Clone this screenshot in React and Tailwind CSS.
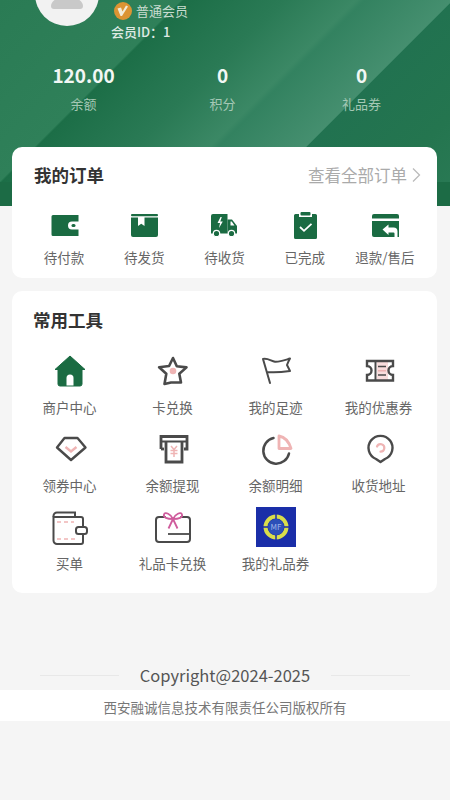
import React from 'react';

const GREEN = '#1a6b42';
const DARK = '#4a4a4a';
const PINK = '#efb4b4';

const orderItems = [
  {
    label: '待付款',
    icon: (
      <>
        <path d="M3.500 7.500A1.500 1.500 0 0 1 5 6h25.500v6.500H24a4 4 0 0 0 0 8h6.500V27H5a1.500 1.500 0 0 1-1.500-1.500z" fill={GREEN} />
        <rect x="23.500" y="15" width="4" height="3" rx="1.500" fill={GREEN} />
      </>
    ),
  },
  {
    label: '待发货',
    icon: (
      <>
        <rect x="3" y="5" width="27" height="2.200" rx="1" fill={GREEN} />
        <path d="M3 8.500h27V26a2 2 0 0 1-2 2H5a2 2 0 0 1-2-2z" fill={GREEN} />
        <path d="M10 8h6.500v9l-3.250-2.200L10 17z" fill="#fff" />
      </>
    ),
  },
  {
    label: '待收货',
    icon: (
      <>
        <path d="M3 7a2 2 0 0 1 2-2h14.500v19.500H3z" fill={GREEN} />
        <path d="M19.500 10.500h4.500l5 6.500v7.500h-9.500z" fill={GREEN} />
        <path d="M22.500 12.500h1.200l2.800 4h-4z" fill="#fff" />
        <circle cx="8.500" cy="24.500" r="3.200" fill={GREEN} stroke="#fff" strokeWidth="1.200" />
        <circle cx="23.500" cy="24.500" r="3.200" fill={GREEN} stroke="#fff" strokeWidth="1.200" />
        <path d="M12.500 8l-3 6h2.500l-1 5 3.800-6.500h-2.500l1.500-4.500z" fill="#fff" />
      </>
    ),
  },
  {
    label: '已完成',
    icon: (
      <>
        <path d="M5 6.500a1.500 1.500 0 0 1 1.500-1.500H10v3h13V5h3.500A1.500 1.500 0 0 1 28 6.500V28.500a1.500 1.500 0 0 1-1.500 1.500h-20A1.500 1.500 0 0 1 5 28.500z" fill={GREEN} />
        <rect x="11.500" y="3" width="10" height="3.500" rx="1" fill={GREEN} />
        <path d="M11 18l4 3.800 7.500-7" fill="none" stroke="#fff" strokeWidth="1.800" />
      </>
    ),
  },
  {
    label: '退款/售后',
    icon: (
      <>
        <path d="M3 7a2 2 0 0 1 2-2h23a2 2 0 0 1 2 2v2.500H3z" fill={GREEN} />
        <path d="M3 12h27v16H5a2 2 0 0 1-2-2z" fill={GREEN} />
        <path d="M13.500 20.500l6-5v3h5a4 4 0 0 1 4 4V28h-3v-3.500a1 1 0 0 0-1-1h-5v2.500z" fill="#fff" />
      </>
    ),
  },
];

const toolItems = [
  {
    label: '商户中心',
    icon: (
      <>
        <path d="M20 5L35 18.500h-3V33a2 2 0 0 1-2 2H10a2 2 0 0 1-2-2V18.500H5z" fill={GREEN} stroke={GREEN} strokeLinejoin="round" />
        <path d="M16.500 34.500V27a3.500 3.500 0 0 1 7 0v7.500z" fill="#fff" />
      </>
    ),
  },
  {
    label: '卡兑换',
    icon: (
      <>
        <path d="M20 7l3.800 8.200 9.700 1.200-7.200 6.400 1.700 8.700H18l-6.500 1.500 1.800-10.200-7.200-6.600 10-1.200z" fill="none" stroke={DARK} strokeWidth="2.600" strokeLinejoin="round" />
        <circle cx="20" cy="20" r="3.300" fill={PINK} />
      </>
    ),
  },
  {
    label: '我的足迹',
    icon: <path d="M14 32L7 8C12 7 15 10 19 10.700C24 11 29 9 34 7.500C32 11 31 14 31 14C32 16 33 18 34 20C27 21 20 22 11 21" fill="none" stroke={DARK} strokeWidth="2" strokeLinejoin="round" strokeLinecap="round" />,
  },
  {
    label: '我的优惠券',
    icon: (
      <>
        <rect x="18" y="11" width="11" height="18" fill={PINK} opacity="0.45" />
        <path d="M8 10h26v5a4.500 4.500 0 0 0 0 9v5.500H8V24a4.500 4.500 0 0 0 0-9z" fill="none" stroke={DARK} strokeWidth="2.400" />
        <path d="M16.500 10v19.500" stroke={DARK} strokeWidth="2" />
        <path d="M19 15.500h8M19 24h8" stroke={DARK} strokeWidth="1.600" />
        <path d="M19 19.750h8" stroke={PINK} strokeWidth="1.600" />
      </>
    ),
  },
  {
    label: '领券中心',
    icon: (
      <>
        <path d="M14.500 9h13l8 9.500L21 31 7 18.500z" fill="none" stroke={DARK} strokeWidth="2.400" strokeLinejoin="round" />
        <path d="M15.500 18l5.500 4.500 5.500-4.500" fill="none" stroke={PINK} strokeWidth="2.400" />
      </>
    ),
  },
  {
    label: '余额提现',
    icon: (
      <>
        <path d="M8 20V7.500h26V20h-3" fill="none" stroke={DARK} strokeWidth="2.800" />
        <path d="M8 20h3" stroke={DARK} strokeWidth="2.800" />
        <path d="M8 12.500h26" stroke={DARK} strokeWidth="2" />
        <path d="M13 13v20h16V13" fill="none" stroke={DARK} strokeWidth="2.800" />
        <path d="M18 17l3 3.500 3-3.500M17.500 21.500h7M17.500 24.500h7M21 20.500V28" fill="none" stroke={PINK} strokeWidth="1.500" />
      </>
    ),
  },
  {
    label: '余额明细',
    icon: (
      <>
        <path d="M17.500 9A13 13 0 1 0 33 24.500" fill="none" stroke={DARK} strokeWidth="2.500" strokeLinecap="round" />
        <path d="M23 7c5.500 1 10 6 12 12.500H23z" fill="none" stroke={PINK} strokeWidth="2.800" strokeLinejoin="round" />
      </>
    ),
  },
  {
    label: '收货地址',
    icon: (
      <>
        <path d="M21.500 33L17 30A12 12 0 1 1 26 30z" fill="none" stroke={DARK} strokeWidth="2.400" strokeLinejoin="round" />
        <path d="M18 17.500a3.800 3.800 0 1 1 3.500 5.200" fill="none" stroke={PINK} strokeWidth="2.200" strokeLinecap="round" />
      </>
    ),
  },
  {
    label: '买单',
    icon: (
      <>
        <path d="M25 9V5.500H7A3.500 3.500 0 0 0 3.500 9v24.500a3.500 3.500 0 0 0 3.500 3.500h24a2 2 0 0 0 2-2v-8" fill="none" stroke={DARK} strokeWidth="2" />
        <path d="M3.500 9a1 1 0 0 0 1 1H31a2 2 0 0 1 2 2v8" fill="none" stroke={DARK} strokeWidth="2" />
        <rect x="26" y="20" width="11" height="7" rx="2.500" fill="#fff" stroke={DARK} strokeWidth="2" />
        <path d="M7 15h17M7 32h20" stroke={PINK} strokeWidth="1.600" strokeDasharray="4 3" />
      </>
    ),
  },
  {
    label: '礼品卡兑换',
    icon: (
      <>
        <path d="M12 10H6a3 3 0 0 0-3 3v19a3 3 0 0 0 3 3h28a3 3 0 0 0 3-3V13a3 3 0 0 0-3-3h-6" fill="none" stroke={DARK} strokeWidth="2" strokeLinecap="round" />
        <path d="M15 27h22" stroke={DARK} strokeWidth="1.800" />
        <path d="M20 12c-2-5-8-7.500-9-4.500s3 4.500 9 4.500c6 0 10-1.500 9-4.500S22 7 20 12zM20 12l-4.500 9.500M20 12l4.500 9.500" fill="none" stroke="#cf5c9c" strokeWidth="1.800" />
      </>
    ),
  },
  {
    label: '我的礼品券',
    icon: (
      <>
        <rect width="40" height="40" fill="#1a2ea8" />
        <circle cx="20" cy="20" r="10.500" fill="none" stroke="#d9dd4a" strokeWidth="4" />
        <path d="M20 5v30M5 20h30" stroke="#1a2ea8" strokeWidth="1.500" />
        <circle cx="20" cy="20" r="8" fill="#2c4fb8" />
        <text x="20" y="23" textAnchor="middle" fontSize="8" fill="#9fb4e8">MF</text>
      </>
    ),
  },
];

const stats = [
  { value: '120.00', label: '余额' },
  { value: '0', label: '积分' },
  { value: '0', label: '礼品券' },
];

export default function App() {
  return (
    <div className="w-[450px] h-[800px] overflow-hidden bg-[#f5f5f5] font-['Noto_Sans_CJK_SC',sans-serif]">
      {/* green header with the diagonal light bands */}
      <div className="h-[206px] overflow-hidden bg-[linear-gradient(to_bottom,transparent_182px,#1c6b45_182px),linear-gradient(135deg,#2a7b54_0px,#2f8059_128px,#1c6e47_130px,#2a7a55_200px,#3b8865_252px,#338260_258px,#458f6f_320px,#217250_321px,#24754f_400px,#2a7a55_464px)]">
        <div className="flex">
          <div className="w-16 h-16 ml-[35px] -mt-[38px] rounded-full bg-[#f2f2f2] flex justify-center overflow-hidden shrink-0">
            <svg width="34" height="20" viewBox="0 0 34 20" className="mt-[27px]">
              <path d="M11 0h12v8c4 1 10 4 10 9a3 3 0 0 1-3 3H4a3 3 0 0 1-3-3c0-5 6-8 10-9z" fill="#c9c9c9" />
            </svg>
          </div>
          <div className="ml-3 text-[13px] leading-[21px] text-[#c9dcd1]">
            <div className="flex items-center ml-[3px]">
              <svg width="18" height="18" viewBox="0 0 18 18" className="mr-[4px]">
                <circle cx="9" cy="9" r="9" fill="#dc9433" />
                <path d="M3.500 6.500l3.500-1 1.500 4L12 3.500l2 1-6 9.500H6.500z" fill="#f3ecd9" />
              </svg>
              普通会员
            </div>
            <div className="font-medium text-[#dfeae4]">会员ID：1</div>
          </div>
        </div>
        <div className="grid grid-cols-3 mt-[20px] ml-[14px] w-[417px] text-center">
          {stats.map((s) => (
            <div key={s.label}>
              <div className="text-[19px] leading-[26px] font-bold text-[#f2f7f4]">{s.value}</div>
              <div className="text-[13px] leading-[18px] mt-[7px] text-[#a5c8b5]">{s.label}</div>
            </div>
          ))}
        </div>
      </div>

      {/* my orders */}
      <div className="-mt-[59px] mx-3 w-[425px] h-[131px] bg-white rounded-[10px]">
        <div className="flex items-center justify-between pl-[22px] pr-4 h-[56px] mb-[6px]">
          <span className="text-[17.500px] font-bold text-[#333]">我的订单</span>
          <span className="flex items-center text-[16.500px] text-[#aaa]">
            查看全部订单
            <svg width="10" height="16" viewBox="0 0 10 16" className="ml-[4px]">
              <path d="M2 1.500L8.500 8 2 14.500" fill="none" stroke="#bbb" strokeWidth="1.300" />
            </svg>
          </span>
        </div>
        <div className="grid grid-cols-5 mx-3">
          {orderItems.map((item) => (
            <div key={item.label} className="flex flex-col items-center">
              <svg width="32" height="32" viewBox="0 0 32 32">{item.icon}</svg>
              <span className="mt-[7px] text-[13.500px] leading-[18px] text-[#666] whitespace-nowrap">{item.label}</span>
            </div>
          ))}
        </div>
      </div>

      {/* common tools */}
      <div className="mt-[13px] mx-3 w-[425px] h-[302px] bg-white rounded-[10px]">
        <div className="pt-[17px] pl-[21px] h-[60px] text-[17.500px] leading-6 font-bold text-[#333]">常用工具</div>
        <div className="grid grid-cols-4 mx-[6px] w-[412px] gap-y-[6px]">
          {toolItems.map((item) => (
            <div key={item.label} className="flex flex-col items-center h-[72px]">
              <svg width="40" height="40" viewBox="0 0 40 40">{item.icon}</svg>
              <span className="mt-[7px] text-[13.500px] leading-[18px] text-[#666] whitespace-nowrap">{item.label}</span>
            </div>
          ))}
        </div>
      </div>

      {/* footer */}
      <div className="mt-[70px] flex items-center justify-center h-6 text-[16.500px] text-[#555]">
        <span className="w-[79px] h-px bg-[#e8e8e8]" />
        <span className="mx-[21px]">Copyright@2024-2025</span>
        <span className="w-[79px] h-px bg-[#e8e8e8]" />
      </div>
      <div className="mt-[3px] h-[31px] bg-white flex items-center justify-center pt-[4px] text-[13.500px] text-[#777]">
        西安融诚信息技术有限责任公司版权所有
      </div>
    </div>
  );
}
